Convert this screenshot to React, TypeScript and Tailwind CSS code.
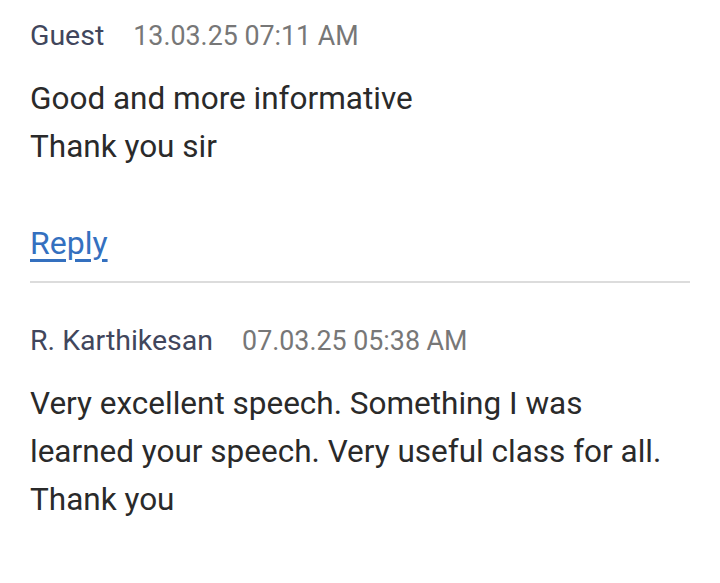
import React from 'react';

type Comment = {
  name: string;
  date: string;
  lines: string[];
};

const comments: Comment[] = [
  { name: 'Guest', date: '13.03.25 07:11 AM', lines: ['Good and more informative', 'Thank you sir'] },
  {
    name: 'R. Karthikesan',
    date: '07.03.25 05:38 AM',
    lines: ['Very excellent speech. Something I was', 'learned your speech. Very useful class for all.', 'Thank you'],
  },
];

const CommentItem = ({ c, last }: { c: Comment; last: boolean }) => (
  <div className={`pt-[18px] ${last ? '' : 'border-b-2 border-[#dcdcdc] pb-[13px]'}`}>
    <div className="flex items-center h-[36px] gap-[29px]">
      <span className="text-[28.5px] text-[#41465c]">{c.name}</span>
      <span className="text-[26.8px] text-[#777777]">{c.date}</span>
    </div>
    <div className="mt-[21px] text-[31.5px] leading-[48px] text-[#2a2a2a]">
      {c.lines.map((l) => (
        <div key={l}>{l}</div>
      ))}
    </div>
    <a href="#" className="block mt-[48px] text-[32px] leading-[49px] text-[#3470bf] underline underline-offset-[5px]">
      Reply
    </a>
  </div>
);

export default function App() {
  return (
    <div className="w-[720px] h-[583px] overflow-hidden bg-white px-[30px] font-['Roboto',sans-serif]">
      {comments.map((c, i) => (
        <div key={c.name} className={i > 0 ? 'mt-[22px]' : ''}>
          <CommentItem c={c} last={i === comments.length - 1} />
        </div>
      ))}
    </div>
  );
}
